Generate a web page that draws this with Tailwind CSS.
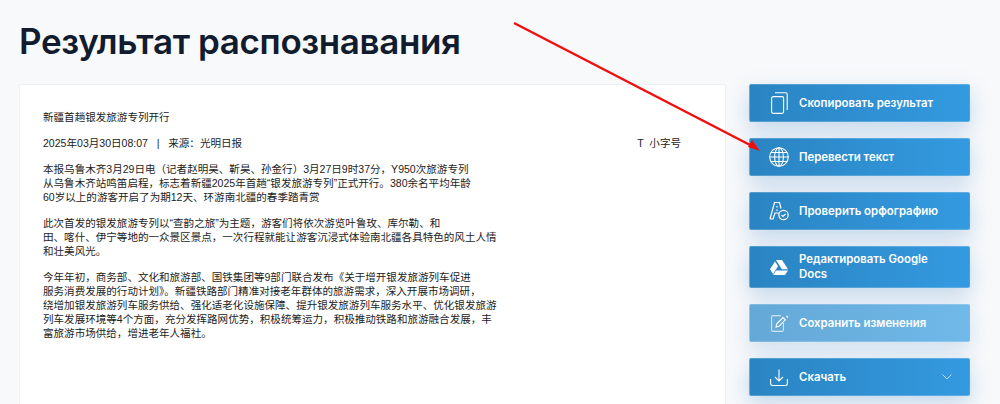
<!DOCTYPE html>
<html lang="ru">
<head>
  <meta charset="UTF-8">
  <meta name="viewport" content="width=device-width, initial-scale=1.0">
  <title>Результат распознавания</title>
  <script src="https://cdn.jsdelivr.net/npm/@tailwindcss/browser@4"></script>
</head>
<body class="relative h-[404px] overflow-hidden bg-[#f8f9fb] font-['Inter','Noto_Sans_CJK_SC',sans-serif]">
  <h1 class="pl-[19px] pt-[18px] h-[84px] text-[35px] leading-[46px] font-semibold tracking-[-0.38px] text-[#111c2e]">Результат распознавания</h1>

  <div class="flex items-start pl-[19px]">
    <!-- article -->
    <div class="w-[707px] h-[340px] bg-white border border-[#eef0f3] rounded-[2px] pt-[25px] pl-[23px] pr-[44px] text-[10.56px] leading-[14px] text-[#1c1c1c] font-['Liberation_Sans','Noto_Sans_CJK_SC',sans-serif]">
      <p class="mb-[12px]">新疆首趟银发旅游专列开行</p>
      <div class="flex justify-between mb-[12px]">
        <span class="whitespace-pre">2025年03月30日08:07   |   来源：光明日报</span>
        <span class="whitespace-pre">T  小字号</span>
      </div>
      <p class="mb-[12px]">本报乌鲁木齐3月29日电（记者赵明昊、靳昊、孙金行）3月27日9时37分，Y950次旅游专列<br>从乌鲁木齐站鸣笛启程，标志着新疆2025年首趟“银发旅游专列”正式开行。380余名平均年龄<br>60岁以上的游客开启了为期12天、环游南北疆的春季踏青赏</p>
      <p class="mb-[12px]">此次首发的银发旅游专列以“查韵之旅”为主题，游客们将依次游览叶鲁玫、库尔勒、和<br>田、喀什、伊宁等地的一众景区景点，一次行程就能让游客沉浸式体验南北疆各具特色的风土人情<br>和壮美风光。</p>
      <p>今年年初，商务部、文化和旅游部、国铁集团等9部门联合发布《关于增开银发旅游列车促进<br>服务消费发展的行动计划》。新疆铁路部门精准对接老年群体的旅游需求，深入开展市场调研，<br>绕增加银发旅游列车服务供给、强化适老化设施保障、提升银发旅游列车服务水平、优化银发旅游<br>列车发展环境等4个方面，充分发挥路网优势，积极统筹运力，积极推动铁路和旅游融合发展，丰<br>富旅游市场供给，增进老年人福社。</p>
    </div>

    <!-- actions -->
    <div class="ml-[23px] w-[221px] flex flex-col gap-[16px] text-[11.4px] font-semibold leading-[15px] text-white">
      <button class="h-[38px] flex items-center pl-[21px] pr-[16px] text-left rounded-[2px] border border-white/20 bg-gradient-to-r from-[#2a84c2] to-[#349ae0] shadow-[0_8px_22px_rgba(42,120,190,0.26)]">
        <svg class="w-[17px] h-[22px] mr-[11px] shrink-0" viewBox="0 0 17 22" fill="none" stroke="#fff" stroke-width="1.1"><rect x=".6" y="4.6" width="12" height="16.8" rx="1.6"/><path d="M4 .8h10.6a1.6 1.6 0 0 1 1.6 1.6V18"/></svg>
        Скопировать результат
      </button>
      <button class="h-[38px] flex items-center pl-[19px] pr-[16px] text-left rounded-[2px] border border-white/20 bg-gradient-to-r from-[#2a84c2] to-[#349ae0] shadow-[0_8px_22px_rgba(42,120,190,0.26)]">
        <svg class="w-[20px] h-[20px] mr-[10px] shrink-0" viewBox="0 0 20 20" fill="none" stroke="#fff" stroke-width="1.1"><circle cx="10" cy="10" r="9.3"/><ellipse cx="10" cy="10" rx="4.4" ry="9.3"/><path d="M10 .7v18.6M.7 10h18.6M2 5.5h16M2 14.5h16"/></svg>
        Перевести текст
      </button>
      <button class="h-[38px] flex items-center pl-[19px] pr-[16px] text-left rounded-[2px] border border-white/20 bg-gradient-to-r from-[#2a84c2] to-[#349ae0] shadow-[0_8px_22px_rgba(42,120,190,0.26)]">
        <svg class="w-[20px] h-[20px] mr-[10px] shrink-0" viewBox="0 0 20 20" fill="none" stroke="#fff" stroke-width="1.2"><path d="M1 18 5.5 1.5h5l1.5 6M1 18h3l2-6h4"/><path d="M8 5v1.5M8 8.5v1.5"/><circle cx="14.5" cy="14" r="4.7"/><path d="m12.5 14 1.5 1.5 2.5-2.5"/></svg>
        Проверить орфографию
      </button>
      <button class="h-[42px] flex items-center pl-[20px] pr-[16px] text-left rounded-[2px] border border-white/20 bg-gradient-to-r from-[#2a84c2] to-[#349ae0] shadow-[0_8px_22px_rgba(42,120,190,0.26)]">
        <svg class="w-[18px] h-[15px] mr-[11px] shrink-0" viewBox="0 0 19 17" preserveAspectRatio="none" fill="#fff"><path d="M6.3 0h6.4l6.3 10.6h-6.4z"/><path d="M5.3 1.6 8.5 7 3.2 16 0 10.6z"/><path d="M6.4 11.8H19L15.8 17H3.3z"/></svg>
        <span class="w-[150px] leading-[15px]">Редактировать Google Docs</span>
      </button>
      <button class="h-[38px] flex items-center pl-[21px] pr-[16px] text-left rounded-[2px] border border-white/20 bg-gradient-to-r from-[#64a8d6] to-[#70b9e9] shadow-[0_8px_22px_rgba(42,120,190,0.2)]">
        <svg class="w-[18px] h-[17px] mr-[10px] shrink-0" viewBox="0 0 18 17" fill="none" stroke="#fff" stroke-width="1.1"><path stroke-opacity="0.7" d="M10 .6H2A1.5 1.5 0 0 0 .6 2v13A1.5 1.5 0 0 0 2 16.4h9a1.5 1.5 0 0 0 1.4-1.4V8"/><path d="m5 12 .6-3L12 2.6l2.3 2.2L8 11.3zM15.5 1l1.5 1.5"/></svg>
        Сохранить изменения
      </button>
      <button class="h-[38px] flex items-center justify-between pl-[20px] pr-[17px] text-left rounded-[2px] border border-white/20 bg-gradient-to-r from-[#2a84c2] to-[#349ae0] shadow-[0_8px_22px_rgba(42,120,190,0.26)]">
        <span class="flex items-center">
          <svg class="w-[18px] h-[17px] mr-[11px] shrink-0" viewBox="0 0 18 17" fill="none" stroke="#fff" stroke-width="1.1"><path d="M.6 10v4.5a2 2 0 0 0 2 2h12.8a2 2 0 0 0 2-2V10"/><path d="M9 .5v11.5M5 8l4 4 4-4"/></svg>
          Скачать
        </span>
        <svg class="w-[10px] h-[6px]" viewBox="0 0 10 6" fill="none" stroke="#fff" stroke-opacity="0.7" stroke-width="1"><path d="m.5.5 4.5 4.5L9.5.5"/></svg>
      </button>
    </div>
  </div>

  <!-- red annotation arrow -->
  <svg class="absolute left-0 top-0 pointer-events-none" width="1000" height="404" viewBox="0 0 1000 404">
    <path d="M514 23 752 146" stroke="#f20d0d" stroke-width="2.4" fill="none"/>
    <path d="M760 151 748 147 752 140z" fill="#f20d0d"/>
  </svg>
</body>
</html>
